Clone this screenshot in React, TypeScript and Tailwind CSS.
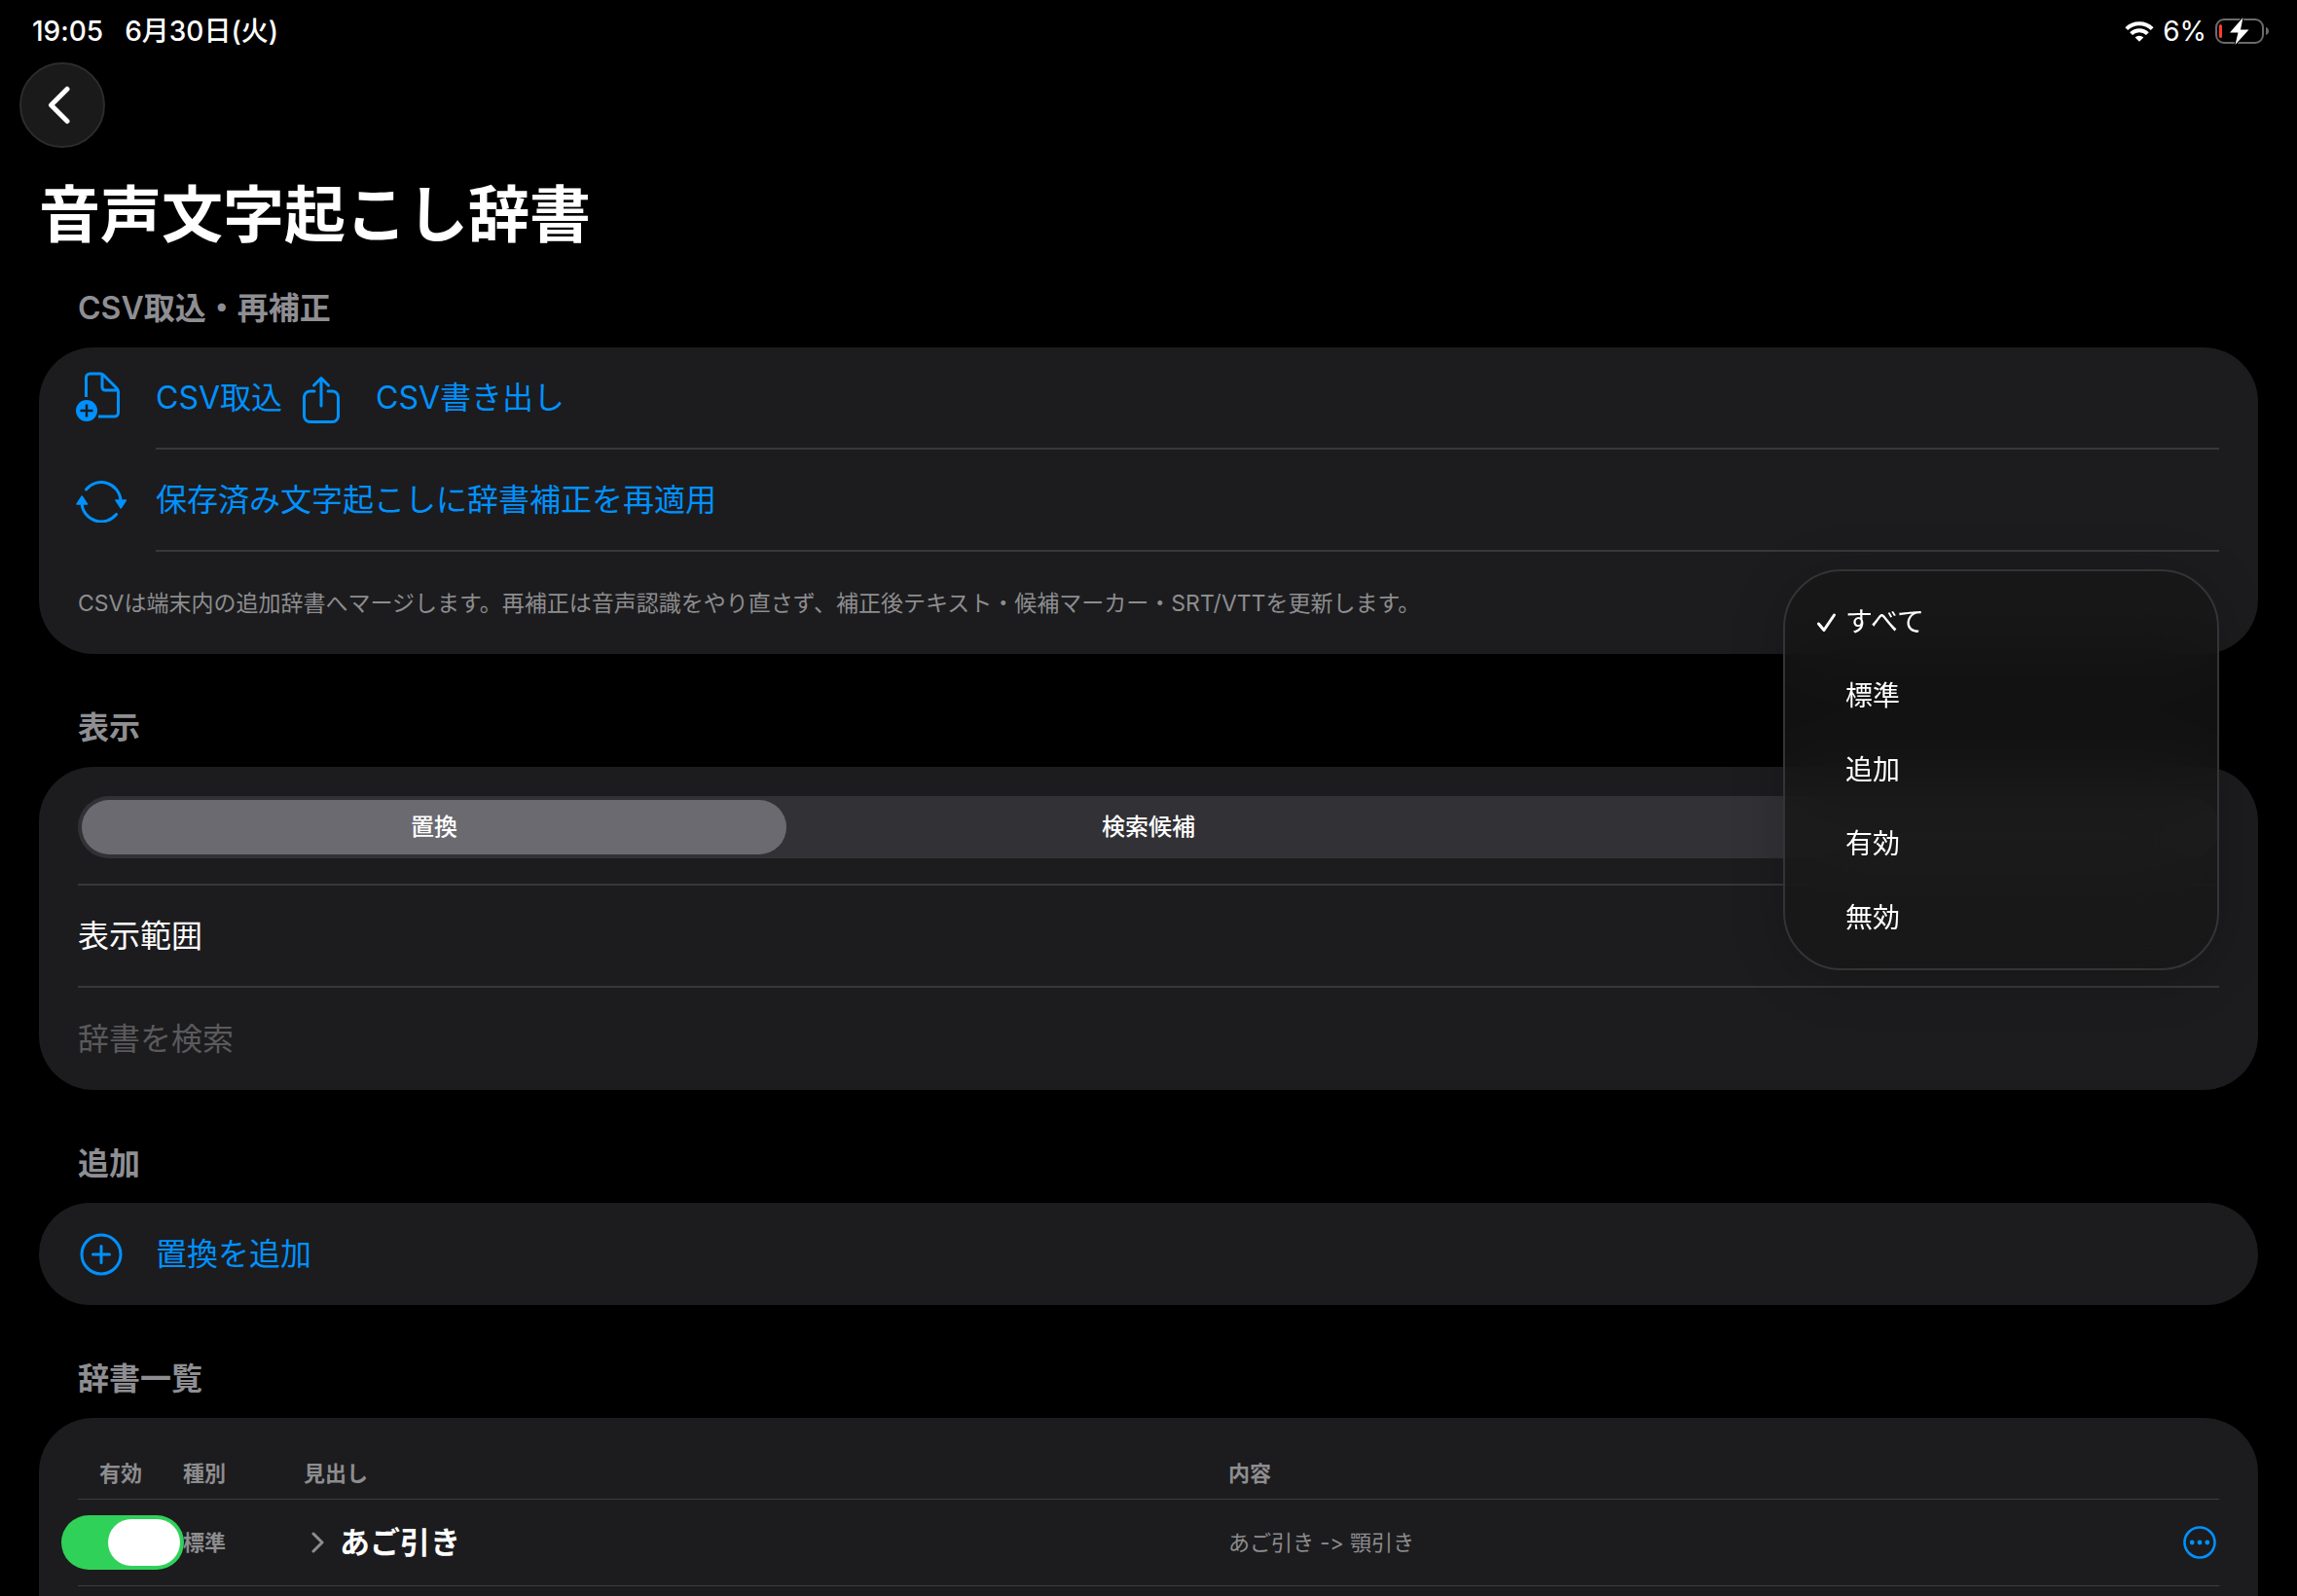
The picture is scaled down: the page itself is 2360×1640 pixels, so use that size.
import React, { useState } from 'react';

const FILTERS = ['すべて', '標準', '追加', '有効', '無効'];
const SEGMENTS = ['置換', '検索候補', ''];

interface DictionaryEntry {
  id: string;
  kind: string;
  title: string;
  content: string;
}

const ENTRIES: DictionaryEntry[] = [
  { id: 'ago-hiki', kind: '標準', title: 'あご引き', content: 'あご引き -> 顎引き' },
];

const StatusBar = () => (
  <div className="flex h-16 items-center justify-between pr-7 pl-[33px] text-[28px] leading-8 font-medium">
    <div className="flex gap-[22px]">
      <span>19:05</span>
      <span>6月30日(火)</span>
    </div>
    <div className="flex items-center gap-[9px]">
      <svg width="30" height="21" viewBox="0 0 30 21" fill="none" stroke="currentColor" strokeWidth="4">
        <path d="M1.800 7.600a18.800 18.800 0 0 1 26.400 0" />
        <path d="M6.600 12.600a12 12 0 0 1 16.800 0" />
        <path d="M10.600 16.400a6.400 6.400 0 0 1 8.800 0L15 20.800z" fill="currentColor" stroke="none" />
      </svg>
      <span className="font-normal">6%</span>
      <svg width="56" height="28" viewBox="0 0 56 28" fill="none">
        <rect x="1" y="2" width="48" height="24" rx="8" stroke="#6b6b6b" strokeWidth="2" />
        <path d="M52 10v8c2-.6 3-2.200 3-4s-1-3.400-3-4z" fill="#6b6b6b" />
        <rect x="4" y="7" width="3" height="14" rx="1.500" fill="#ff3b30" />
        <path d="M28.500 0 15 15.500h8.500L20.500 28 34.500 12.500H26z" fill="#fff" stroke="#000" strokeWidth="2" paintOrder="stroke" />
      </svg>
    </div>
  </div>
);

const DocumentPlusIcon = () => (
  <svg width="46" height="54" viewBox="0 0 46 54" fill="none" stroke="currentColor" strokeWidth="3">
    <path d="M10.500 26V6a4 4 0 0 1 4-4H25q2 0 3.500 1.500L42 17q1.500 1.500 1.500 3.500V42a4 4 0 0 1-4 4H23" />
    <path d="M27 3v13a3 3 0 0 0 3 3h13" />
    <circle cx="11" cy="40" r="11" fill="currentColor" stroke="none" />
    <path d="M11 33.500v13M4.500 40h13" stroke="#1c1c1e" strokeWidth="2.500" />
  </svg>
);

const ShareIcon = () => (
  <svg width="40" height="54" viewBox="0 -4 40 54" fill="none" stroke="currentColor" strokeWidth="3" strokeLinecap="round" strokeLinejoin="round">
    <path d="M13 16H8.500a6 6 0 0 0-6 6v19.500a6 6 0 0 0 6 6h23a6 6 0 0 0 6-6V22a6 6 0 0 0-6-6H27" />
    <path d="M20 31V3M12.500 10 20 2.500 27.500 10" />
  </svg>
);

const RefreshIcon = () => (
  <svg width="52" height="46" viewBox="0 0 52 46" fill="none" stroke="currentColor" strokeWidth="3" strokeLinecap="round">
    <path d="M10.500 12A20 20 0 0 1 46 23" />
    <path d="M41.500 37.500A20 20 0 0 1 6 26.500" />
    <path d="M41 23h10.500L46.200 31zM1 27h10.500L6.200 19z" fill="currentColor" strokeWidth="1.500" strokeLinejoin="round" />
  </svg>
);

const PlusCircleIcon = () => (
  <svg width="44" height="44" viewBox="0 0 44 44" fill="none" stroke="currentColor" strokeWidth="3" strokeLinecap="round">
    <circle cx="22" cy="22" r="20" />
    <path d="M22 13.500v17M13.500 22h17" />
  </svg>
);

const EllipsisCircleIcon = () => (
  <svg width="34" height="34" viewBox="0 0 34 34" fill="currentColor">
    <circle cx="17" cy="17" r="15.500" fill="none" stroke="currentColor" strokeWidth="2.600" />
    <circle cx="9.200" cy="17" r="2.400" />
    <circle cx="17" cy="17" r="2.400" />
    <circle cx="24.800" cy="17" r="2.400" />
  </svg>
);

const SectionTitle = ({ children }: { children: React.ReactNode }) => (
  <h2 className="px-10 pt-[52px] pb-4 text-[32px] leading-[48px] font-semibold text-[#8e8e93]">{children}</h2>
);

export default function App() {
  const [segment, setSegment] = useState(0);
  const [filter, setFilter] = useState('すべて');

  return (
    <div
      lang="ja"
      className="flex h-screen flex-col overflow-hidden bg-black font-[Inter,'Noto_Sans_CJK_JP',sans-serif] text-white [font-variant-ligatures:none]"
    >
      <StatusBar />

      <header>
        <button aria-label="戻る" className="ml-5 flex size-[88px] items-center justify-center rounded-full border-2 border-[#2c2c2c] bg-[#1a1a1a]">
          <svg width="30" height="42" viewBox="0 0 30 42" fill="none" stroke="currentColor" strokeWidth="5" strokeLinecap="round" strokeLinejoin="round">
            <path d="M20 4.500 3.500 21 20 37.500" />
          </svg>
        </button>
        <h1 className="mt-[22px] px-10 text-[63px] leading-[92px] font-bold">音声文字起こし辞書</h1>
      </header>

      <main className="-mt-[25px] flex flex-1 flex-col px-10">
        {/* Import / export */}
        <section>
          <SectionTitle>CSV取込・再補正</SectionTitle>
          <div className="rounded-[56px] bg-[#1c1c1e] px-10 text-[32px] leading-[48px] text-[#0091ff]">
            <div className="ml-20 flex h-[105px] items-center border-b-2 border-[#38383a]">
              <button className="-ml-[82px] flex items-center gap-9">
                <DocumentPlusIcon />
                CSV取込
              </button>
              <button className="ml-5 flex items-center gap-9">
                <ShareIcon />
                CSV書き出し
              </button>
            </div>
            <div className="ml-20 flex h-[105px] items-center border-b-2 border-[#38383a]">
              <button className="-ml-[82px] flex items-center gap-[30px]">
                <RefreshIcon />
                保存済み文字起こしに辞書補正を再適用
              </button>
            </div>
            <p className="flex h-[105px] items-center text-[23px] leading-8 text-[#8d8d8f]">
              CSVは端末内の追加辞書へマージします。再補正は音声認識をやり直さず、補正後テキスト・候補マーカー・SRT/VTTを更新します。
            </p>
          </div>
        </section>

        {/* Display options */}
        <section>
          <SectionTitle>表示</SectionTitle>
          <div className="rounded-[56px] bg-[#1c1c1e] px-10 text-[32px] leading-[48px]">
            <div className="border-b-2 border-[#38383a] pt-[30px] pb-[26px]">
              <div className="grid h-16 grid-cols-3 gap-2.5 rounded-full bg-[#323136] p-1 text-2xl font-medium">
                {SEGMENTS.map((label, index) => (
                  <button
                    key={index}
                    aria-pressed={segment === index}
                    onClick={() => setSegment(index)}
                    className={`rounded-full ${segment === index ? 'bg-[#6b6a70]' : ''}`}
                  >
                    {label}
                  </button>
                ))}
              </div>
            </div>
            <div className="relative flex h-[105px] items-center border-b-2 border-[#38383a]">
              <span>表示範囲</span>
              {/* Filter menu */}
              <div
                role="menu"
                className="absolute right-0 bottom-4 z-10 w-[448px] rounded-[60px] border-2 border-[#343436] bg-[#171717]/75 py-3.5 text-[28px] shadow-[0_8px_56px_rgba(0,0,0,0.2)] backdrop-blur-2xl"
              >
                {FILTERS.map((name) => (
                  <button
                    key={name}
                    role="menuitemradio"
                    aria-checked={filter === name}
                    onClick={() => setFilter(name)}
                    className="flex h-[76px] w-full items-center gap-2 pl-8"
                  >
                    <svg width="22" height="22" viewBox="0 0 22 22" fill="none" stroke="currentColor" strokeWidth="3" strokeLinecap="round" strokeLinejoin="round">
                      {filter === name && <path d="M2.500 13 8 19.500 18.500 4" />}
                    </svg>
                    {name}
                  </button>
                ))}
              </div>
            </div>
            <input
              type="text"
              aria-label="辞書を検索"
              placeholder="辞書を検索"
              className="block h-[105px] w-full bg-transparent outline-none placeholder:text-[#5a5a5c]"
            />
          </div>
        </section>

        {/* Add entry */}
        <section>
          <SectionTitle>追加</SectionTitle>
          <div className="rounded-full bg-[#1c1c1e] px-[42px] text-[32px] leading-[48px] text-[#0091ff]">
            <button className="flex h-[105px] w-full items-center gap-[34px]">
              <PlusCircleIcon />
              置換を追加
            </button>
          </div>
        </section>

        {/* Entry list */}
        <section className="flex flex-1 flex-col">
          <SectionTitle>辞書一覧</SectionTitle>
          <div className="flex-1 rounded-t-[56px] bg-[#1c1c1e] px-10">
            <table className="w-full table-fixed border-separate border-spacing-0 text-left text-[22px] leading-8 text-[#8d8d8f]">
              <thead>
                <tr className="*:border-b *:border-[#3d3d3f] *:pt-[41px] *:pb-[10px] *:font-semibold">
                  <th className="w-[108px] pr-5 text-center">有効</th>
                  <th className="w-[124px]">種別</th>
                  <th>見出し</th>
                  <th>内容</th>
                  <td className="w-[68px]" />
                </tr>
              </thead>
              <tbody>
                {ENTRIES.map((entry) => (
                  <tr key={entry.id} className="*:h-[89px] *:border-b *:border-[#3d3d3f]">
                    <td>
                      <label className="-ml-[17px] block h-14 w-[126px] rounded-full bg-[#39393d] p-1 has-checked:bg-[#30d158]">
                        <input type="checkbox" defaultChecked aria-label={entry.title} className="peer sr-only" />
                        <span className="block h-12 w-[74px] rounded-full bg-white peer-checked:ml-auto" />
                      </label>
                    </td>
                    <td className="font-semibold">{entry.kind}</td>
                    <td>
                      <button className="flex items-center gap-4 pl-2 text-[31px] leading-[48px] font-semibold text-white">
                        <svg width="13" height="22" viewBox="0 0 13 22" fill="none" stroke="#8d8d8f" strokeWidth="3" strokeLinecap="round" strokeLinejoin="round">
                          <path d="M2 2l9 9-9 9" />
                        </svg>
                        {entry.title}
                      </button>
                    </td>
                    <td>{entry.content}</td>
                    <td>
                      <button aria-label="操作" className="mr-[3px] ml-auto block text-[#0091ff]">
                        <EllipsisCircleIcon />
                      </button>
                    </td>
                  </tr>
                ))}
              </tbody>
            </table>
          </div>
        </section>
      </main>
    </div>
  );
}
